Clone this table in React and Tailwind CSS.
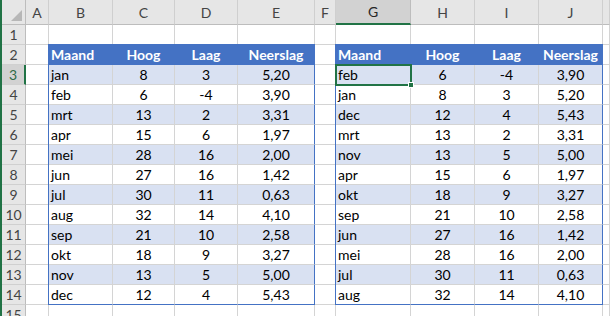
import React from 'react';

const COLS = ['A', 'B', 'C', 'D', 'E', 'F', 'G', 'H', 'I', 'J', ''];

const left = [
  ['jan', 8, 3, '5,20'],
  ['feb', 6, -4, '3,90'],
  ['mrt', 13, 2, '3,31'],
  ['apr', 15, 6, '1,97'],
  ['mei', 28, 16, '2,00'],
  ['jun', 27, 16, '1,42'],
  ['jul', 30, 11, '0,63'],
  ['aug', 32, 14, '4,10'],
  ['sep', 21, 10, '2,58'],
  ['okt', 18, 9, '3,27'],
  ['nov', 13, 5, '5,00'],
  ['dec', 12, 4, '5,43'],
];

const right = [
  ['feb', 6, -4, '3,90'],
  ['jan', 8, 3, '5,20'],
  ['dec', 12, 4, '5,43'],
  ['mrt', 13, 2, '3,31'],
  ['nov', 13, 5, '5,00'],
  ['apr', 15, 6, '1,97'],
  ['okt', 18, 9, '3,27'],
  ['sep', 21, 10, '2,58'],
  ['jun', 27, 16, '1,42'],
  ['mei', 28, 16, '2,00'],
  ['jul', 30, 11, '0,63'],
  ['aug', 32, 14, '4,10'],
];

const Cell = ({ children, band, head, first, lastCol, lastRow, selected }) => {
  let bg = 'bg-white';
  if (head) bg = 'bg-[#4472c4] text-white font-bold';
  else if (band) bg = 'bg-[#d9e1f2]';
  const br = lastCol || head ? 'border-r-[#4472c4]' : 'border-r-[#d4d4d4]';
  const bb = lastRow || head ? 'border-b-[#4472c4]' : 'border-b-[#d4d4d4]';
  return (
    <div
      className={`relative ${bg} border-r border-b ${br} ${bb} flex items-center whitespace-nowrap ${
        first ? 'justify-start pl-[2px]' : 'justify-center'
      }`}
    >
      {children}
      {selected && (
        <div className="absolute -left-px -top-px -right-[2px] -bottom-[2px] border-2 border-[#217346] z-10">
          <div className="absolute -right-[4px] -bottom-[4px] w-[6px] h-[6px] bg-[#217346] border border-white" />
        </div>
      )}
    </div>
  );
};

const Empty = () => <div className="bg-white border-r border-b border-[#d4d4d4]" />;

const Table = ({ data, place, cols, selectFirst }) => (
  <div
    className={`${place} ${cols} -ml-px -mt-px border-l border-t border-[#4472c4] grid grid-rows-[repeat(13,20px)] z-[1]`}
  >
    <Cell head first>Maand</Cell>
    <Cell head>Hoog</Cell>
    <Cell head>Laag</Cell>
    <Cell head lastCol>Neerslag</Cell>
    {data.map((row, i) => {
      const band = i % 2 === 0;
      const lastRow = i === data.length - 1;
      return (
        <React.Fragment key={i}>
          <Cell band={band} first lastRow={lastRow} selected={selectFirst && i === 0}>
            {row[0]}
          </Cell>
          <Cell band={band} lastRow={lastRow}>{row[1]}</Cell>
          <Cell band={band} lastRow={lastRow}>{row[2]}</Cell>
          <Cell band={band} lastRow={lastRow} lastCol>{row[3]}</Cell>
        </React.Fragment>
      );
    })}
  </div>
);

export default function App() {
  const rows = Array.from({ length: 15 }, (_, i) => i + 1);

  return (
    <div
      className="w-[610px] h-[316px] overflow-hidden bg-white border-l-2 border-[#217346] text-[14px] text-black"
      style={{ fontFamily: 'Lato, "Noto Sans", sans-serif' }}
    >
      <div className="grid grid-cols-[24px_23px_64px_62px_63px_77px_21px_75px_64px_64px_64px_1fr] grid-rows-[25px_repeat(15,20px)]">
        {/* corner */}
        <div className="bg-[#e6e6e6] border-r border-b border-[#bdbdbd] flex items-end justify-end p-[3px]">
          <svg width="11" height="11" viewBox="0 0 11 11">
            <polygon points="11,0 11,11 0,11" fill="#b7b7b7" />
          </svg>
        </div>
        {COLS.map((c) => (
          <div
            key={c || 'k'}
            className={`flex items-center justify-center border-r text-[#444] ${
              c === 'G'
                ? 'bg-[#d2d2d2] border-r-[#bdbdbd] border-b-2 border-b-[#217346] text-[#262626]'
                : 'bg-[#e6e6e6] border-r-[#cfcfcf] border-b border-b-[#bdbdbd]'
            }`}
          >
            {c}
          </div>
        ))}

        <Table
          data={left}
          place="col-start-3 col-end-7 row-start-3 row-end-16"
          cols="grid-cols-[64px_62px_63px_77px]"
        />
        <Table
          data={right}
          place="col-start-8 col-end-12 row-start-3 row-end-16"
          cols="grid-cols-[75px_64px_64px_64px]"
          selectFirst
        />

        {rows.map((r) => (
          <React.Fragment key={r}>
            <div
              className={`flex items-center justify-center border-b border-b-[#d0d0d0] ${
                r === 3
                  ? 'bg-[#d2d2d2] border-r-2 border-r-[#217346] text-[#2f6b46]'
                  : 'bg-[#e6e6e6] border-r border-r-[#bdbdbd] text-[#444]'
              }`}
            >
              {r}
            </div>
            <Empty />
            {(r === 1 || r === 15) && [0, 1, 2, 3].map((i) => <Empty key={'l' + i} />)}
            <Empty />
            {(r === 1 || r === 15) && [0, 1, 2, 3].map((i) => <Empty key={'r' + i} />)}
            <Empty />
          </React.Fragment>
        ))}
      </div>
    </div>
  );
}
